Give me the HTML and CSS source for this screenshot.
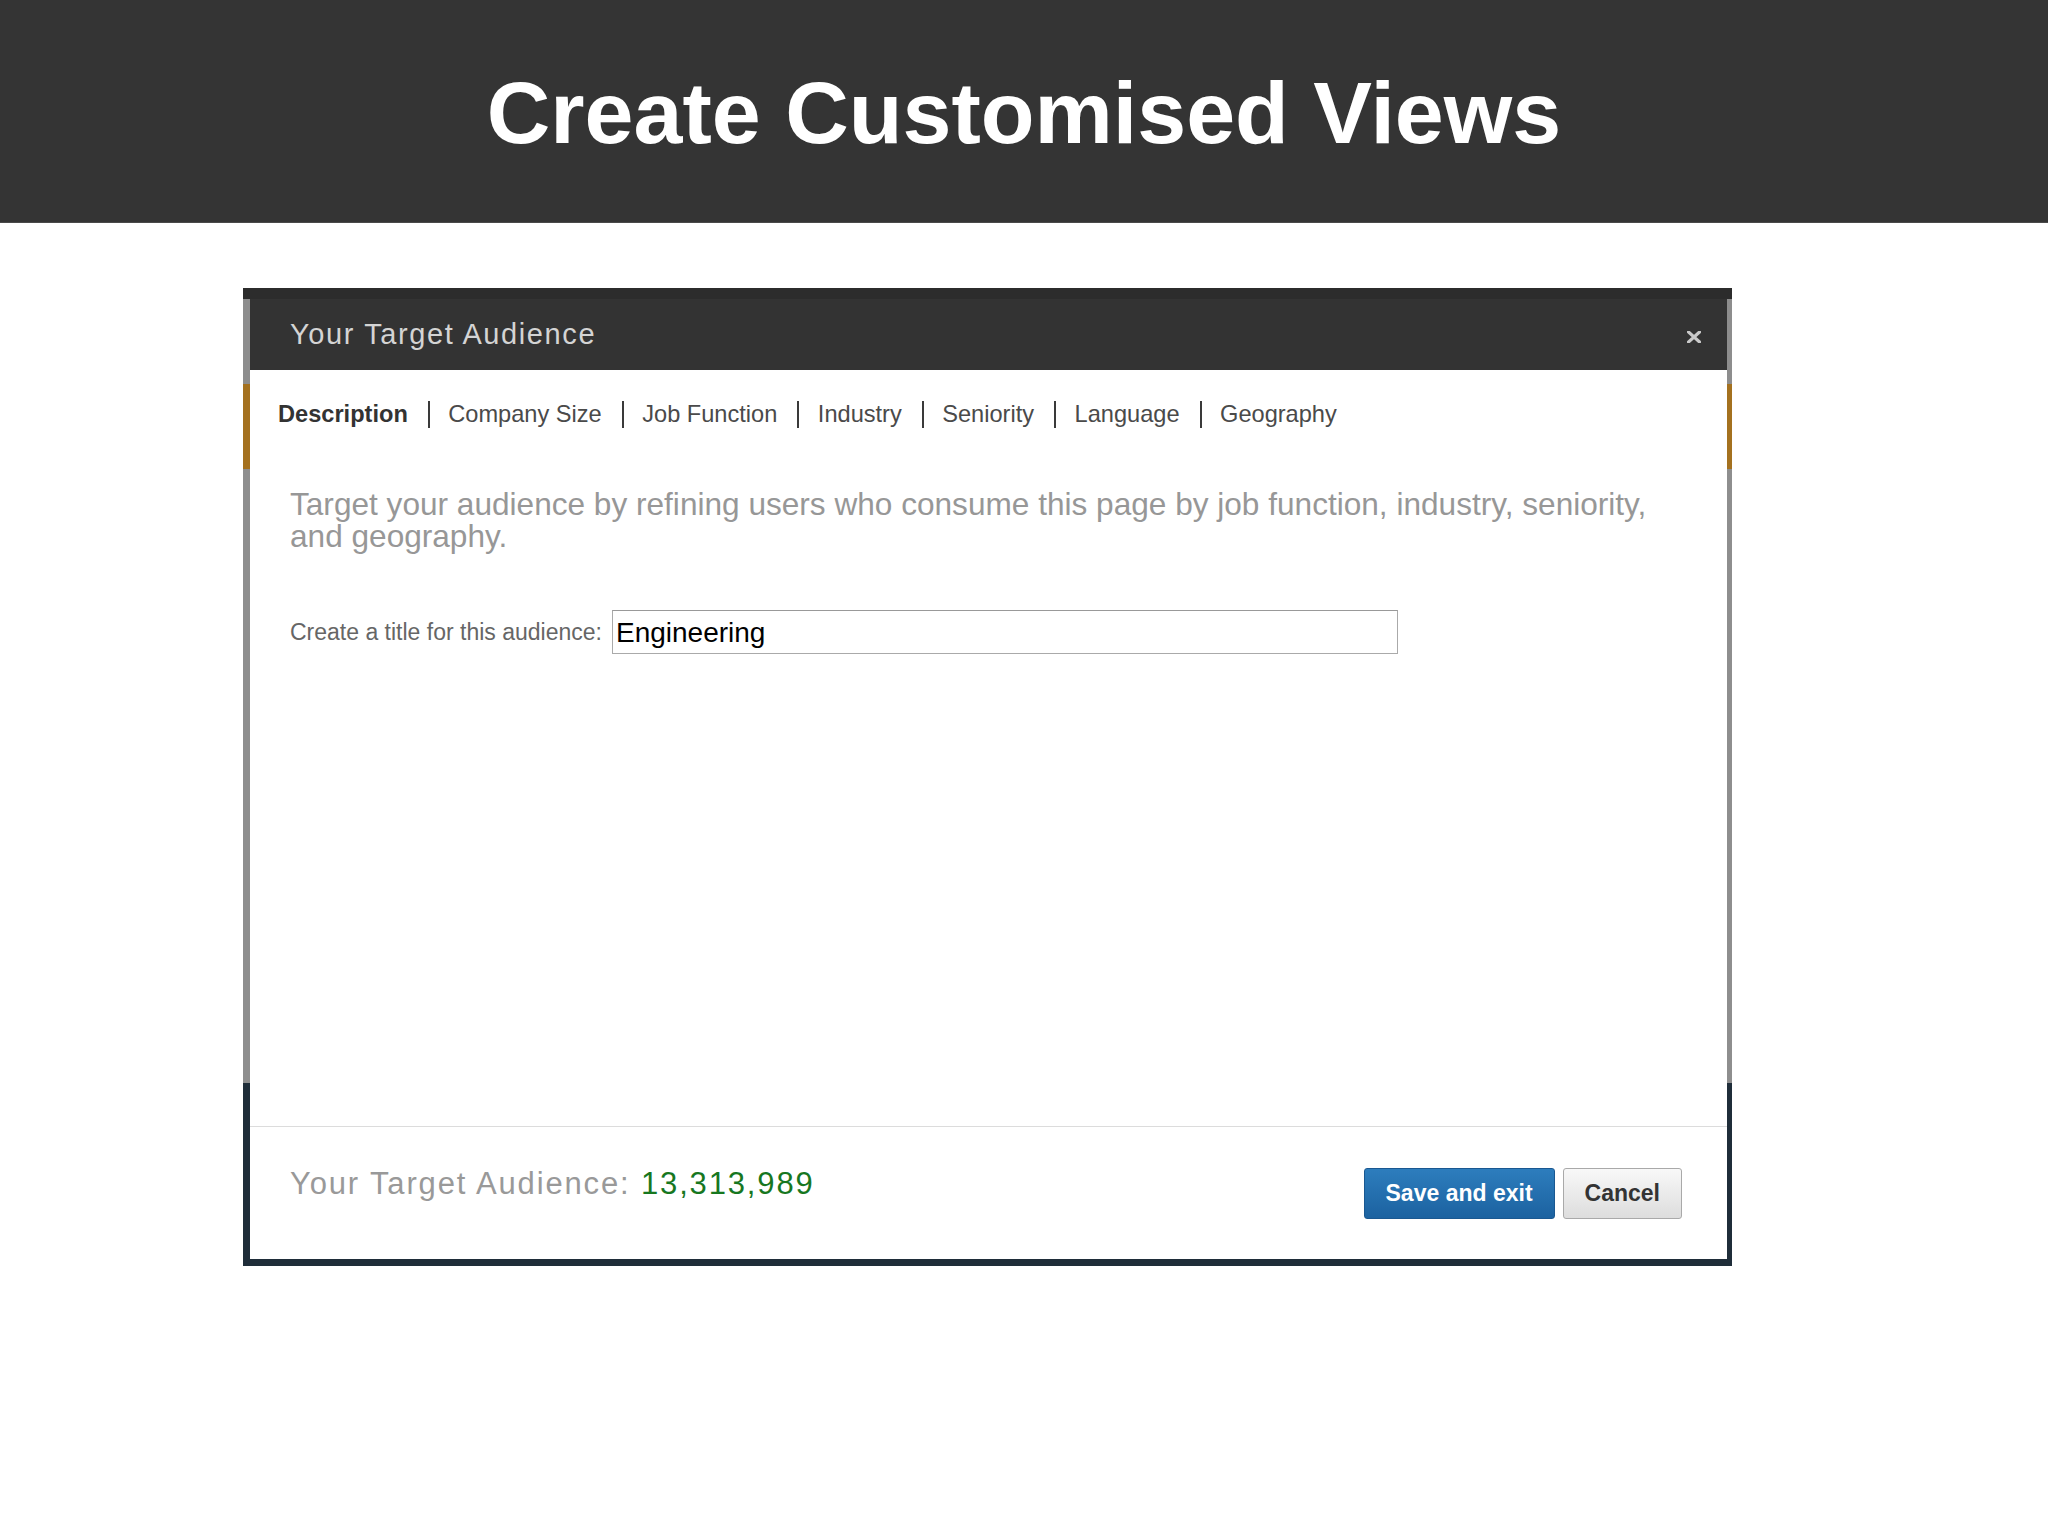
FILE: index.html
```html
<!DOCTYPE HTML>
<html>
<head>
<title>Create Customised Views</title>
<link rel="stylesheet" href="styles.css">
</head>
<body>
<div class="banner"><h1>Create Customised Views</h1></div>

<div class="shot">
<div class="dialog">
  <div class="dtitle">
    <span>Your Target Audience</span>
    <svg class="close" width="14" height="12" viewBox="0 0 14 12"><path d="M1.5 1 L12.5 11 M12.5 1 L1.5 11" stroke="#c9c9c9" stroke-width="3.2" stroke-linecap="square"/></svg>
  </div>
  <div class="dbody">
    <ul class="tabs">
      <li class="on">Description</li>
      <li>Company Size</li>
      <li>Job Function</li>
      <li>Industry</li>
      <li>Seniority</li>
      <li>Language</li>
      <li>Geography</li>
    </ul>
    <p class="intro">Target your audience by refining users who consume this page by job function, industry, seniority, and geography.</p>
    <div class="field">
      <label for="atitle">Create a title for this audience:</label>
      <input id="atitle" type="text" value="Engineering">
    </div>
  </div>
  <div class="dfoot">
    <div class="count">Your Target Audience: <span class="num">13,313,989</span></div>
    <div class="btns">
      <button class="btn save">Save and exit</button>
      <button class="btn cancel">Cancel</button>
    </div>
  </div>
</div>
</div>
</body>
</html>
```

FILE: styles.css
```css
body        {margin: 0; background: #fff; font-family: "Liberation Sans", Arial, sans-serif;}

.banner     {height: 223px; background: #343434; display: flex; align-items: center; justify-content: center; box-sizing: border-box; padding-top: 4px; border-bottom: 1px solid #4a4a4a;}
.banner h1  {margin: 0; color: #fff; font-size: 88px; font-weight: bold; line-height: 1.1;}

/* screenshot frame: the page behind the dialog shows at the edges */
.shot       {width: 1489px; margin: 65px 0 0 243px; box-sizing: border-box; padding: 11px 5px 7px 7px;
             background: linear-gradient(to bottom, #2c2c2c 0 11px, #8d8d8d 11px 96px, #a4711f 96px 181px, #8e8e8e 181px 795px, #1f2d39 795px);}
.dialog     {height: 960px; background: #fff; display: flex; flex-direction: column;}

.dtitle     {height: 71px; flex: none; background: #333; display: flex; align-items: center; justify-content: space-between; padding: 0 26px 0 40px;}
.dtitle span {color: #d4d4d4; font-size: 29px; letter-spacing: 1.6px;}
.close      {display: block; margin-top: 4px;}

.dbody      {flex: 1; padding: 31px 0 0 0;}
.tabs       {list-style: none; margin: 0; padding: 0 0 0 28px; display: flex;}
.tabs li    {font-size: 23.6px; line-height: 27px; color: #4a4a4a; padding: 0 20px 0 18.5px; border-left: 2px solid #3a3a3a;}
.tabs li:first-child {border-left: none; padding-left: 0;}
.tabs li.on {color: #333; font-weight: bold;}

.intro      {margin: 60px 0 0 40px; width: 1395px; font-size: 31.6px; line-height: 32px; color: #979797;}

.field      {display: flex; align-items: center; margin: 58px 0 0 40px;}
.field label {font-size: 23px; color: #666; margin-right: 10px;}
.field input {width: 786px; height: 44px; box-sizing: border-box; border: 1px solid #aaa; border-top-color: #999; padding: 2px 3px 0; font-family: "Liberation Sans", Arial, sans-serif; font-size: 28px; color: #000; outline: none;}

.dfoot      {height: 133px; flex: none; box-sizing: border-box; border-top: 1px solid #dcdcdc; display: flex; justify-content: space-between; align-items: flex-start; padding: 39px 45px 0 40px;}
.count      {font-size: 31px; line-height: 36px; letter-spacing: 1.85px; color: #999;}
.count .num {color: #17771f;}
.btns       {display: flex; gap: 8px; margin-top: 2px;}
.btn        {height: 51px; padding: 0 21px; font-family: "Liberation Sans", Arial, sans-serif; font-size: 23px; font-weight: bold; border-radius: 3px; cursor: pointer;}
.save       {color: #fff; background: linear-gradient(#2d7dbd, #1c62a0); border: 1px solid #1a5891;}
.cancel     {color: #333; background: linear-gradient(#f8f8f8, #dddddd); border: 1px solid #a9a9a9;}
```
